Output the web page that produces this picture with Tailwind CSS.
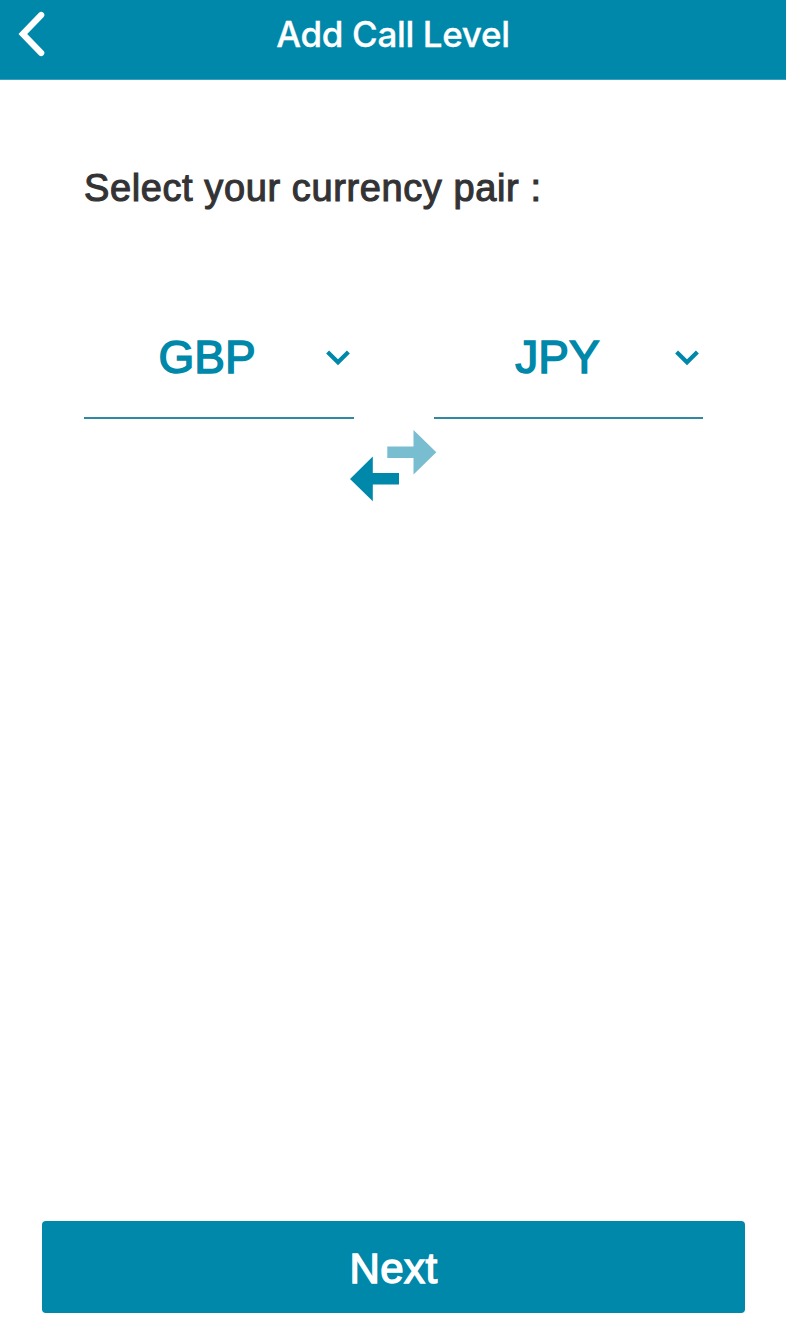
<!DOCTYPE html>
<html lang="en">
<head>
<meta charset="utf-8">
<title>Add Call Level</title>
<script src="https://cdn.jsdelivr.net/npm/@tailwindcss/browser@4"></script>
</head>
<body class="bg-white font-['Liberation_Sans',sans-serif]">
<div class="flex h-[1344px] w-[786px] flex-col overflow-hidden">
  <header class="grid h-20 grid-cols-[80px_1fr_80px] border-b border-[#3c9fbb] bg-[#0088aa] text-white">
    <button aria-label="Back" class="flex items-start pt-2.5 pl-[15px]">
      <svg class="h-12 w-8" viewBox="0 0 32 48" fill="none" stroke="currentColor" stroke-width="6.2" stroke-linecap="round" stroke-linejoin="miter"><path d="M26.2 5 7.8 24 26.2 43"/></svg>
    </button>
    <h1 class="pt-3 text-center font-['Inter',sans-serif] text-[35px] leading-[44px] font-medium tracking-[-0.35px] whitespace-nowrap [-webkit-text-stroke:0.3px_white]"><span>Add Call Level</span></h1>
  </header>
  <main class="flex flex-1 flex-col px-[42px] pb-[31px]">
    <h2 class="mt-[84px] ml-[42px] text-[38px] leading-12 tracking-[0.6px] whitespace-nowrap text-[#333335] [-webkit-text-stroke:1.1px_#333335]"><span>Select your currency pair :</span></h2>
    <div class="mt-[108px] ml-[42px] grid w-[619px] grid-cols-[270px_269px] gap-x-20 text-[#0088aa]">
      <button class="grid h-[99px] grid-cols-[1fr_26px] items-start border-b-2 border-[#3188a3] pr-[3px]">
        <span class="pt-[9px] pl-[5px] text-center text-[46px] leading-[56px] [-webkit-text-stroke:1.5px_#0088aa]"><span>GBP</span></span>
        <svg class="mt-[29px] h-[18px] w-[26px]" viewBox="0 0 26 18" fill="none" stroke="currentColor" stroke-width="4.2"><path d="M2.6 3 13 13.2 23.4 3"/></svg>
      </button>
      <button class="grid h-[99px] grid-cols-[1fr_26px] items-start border-b-2 border-[#3188a3] pr-[3px]">
        <span class="pt-[9px] pl-[7px] text-center text-[46px] leading-[56px] [-webkit-text-stroke:1.5px_#0088aa]"><span>JPY</span></span>
        <svg class="mt-[29px] h-[18px] w-[26px]" viewBox="0 0 26 18" fill="none" stroke="currentColor" stroke-width="4.2"><path d="M2.6 3 13 13.2 23.4 3"/></svg>
      </button>
    </div>
    <button aria-label="Swap currencies" class="mt-[11px] ml-[308px] h-[72px] w-[87px]">
      <svg class="h-[72px] w-[87px]" viewBox="0 0 87 72"><path fill="#78bdd0" d="M37.3 16.5H63.5V0L86.3 22.3 63.5 44.5V28H37.3z"/><path fill="#0088aa" d="M0 49 22.8 26.5V43H49V54.5H22.8V71.3z"/></svg>
    </button>
    <button class="mt-auto flex h-[92px] w-[703px] items-center justify-center rounded-[4px] bg-[#0088aa] pt-[3px] text-[42px] leading-none tracking-[0.4px] text-white [-webkit-text-stroke:1.4px_white]"><span>Next</span></button>
  </main>
</div>
</body>
</html>
